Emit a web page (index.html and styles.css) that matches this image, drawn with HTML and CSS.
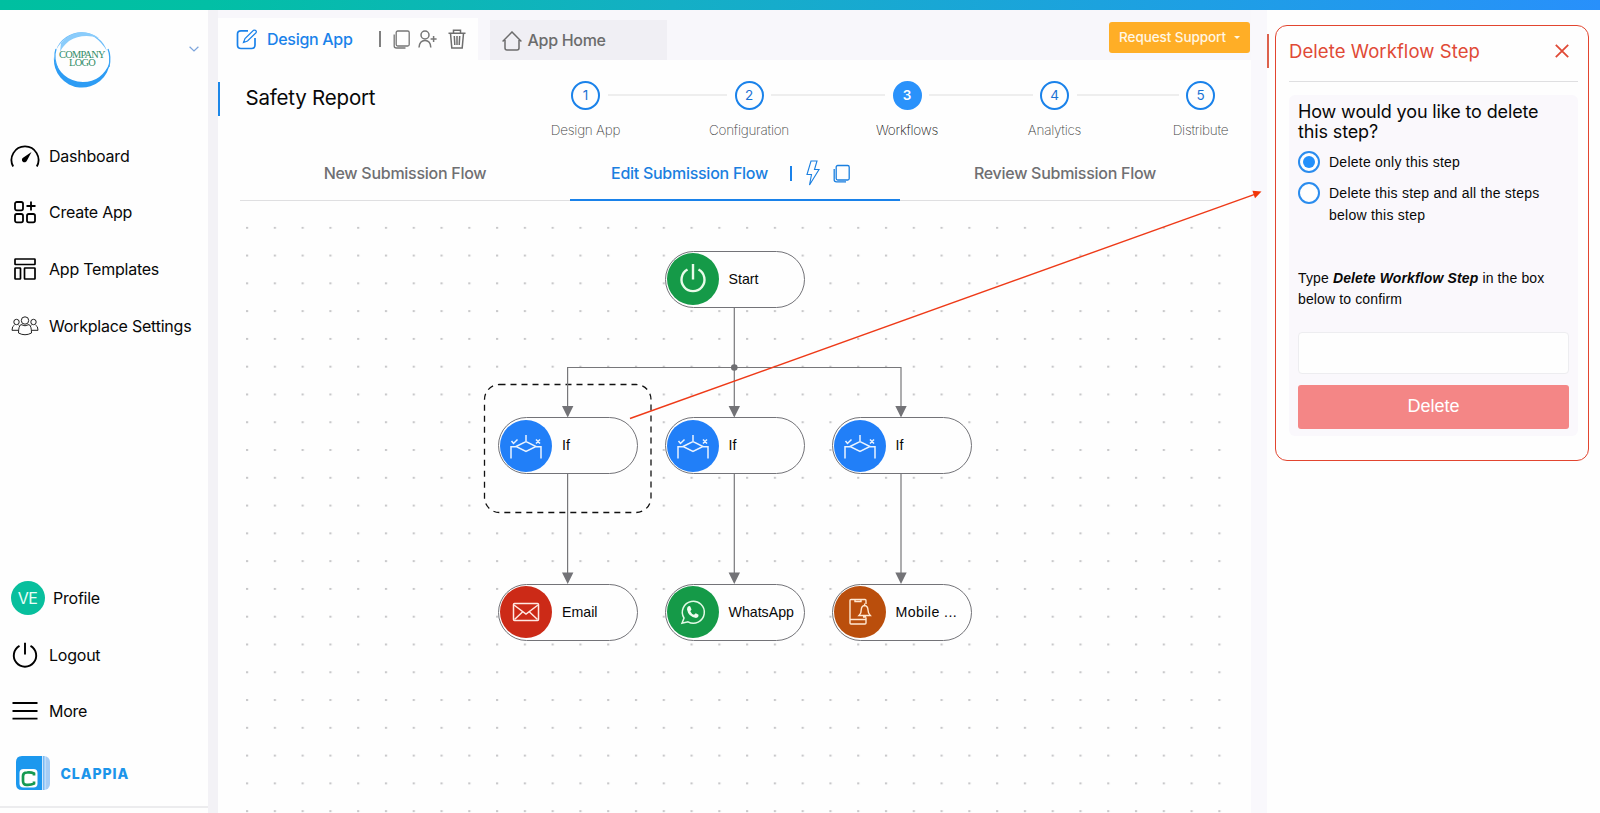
FILE: index.html
```html
<!DOCTYPE html>
<html lang="en">
<head>
<meta charset="utf-8">
<title>Safety Report</title>
<link rel="stylesheet" href="styles.css">
</head>
<body>
<div class="stripe"></div>
<div class="shell">
  <aside class="sidebar">
    <div class="brand">
      <div class="logo">
        <svg class="logo-ring" viewBox="0 0 60 60" width="60" height="60">
          <path d="M4 21A27 27 0 0 1 55 22Q44 4 29 4Q12 6 4 21z" fill="#3ba5f7" opacity=".75"/>
          <path d="M9 14A27 27 0 0 1 47 9Q30 4 17 12Q10 18 8 23z" fill="#8accfb"/>
          <path d="M2 28A28 28 0 0 0 58 33Q50 53 31 53Q8 52 2 28z" fill="#2d9cf4"/>
          <path d="M4 20Q1 29 6 40M56 20Q59 27 57 38" fill="none" stroke="#3ba5f7" stroke-width="1.3"/>
        </svg>
        <span class="logo-text">COMPANY<br>LOGO</span>
      </div>
      <svg class="chevron" width="10" height="6" viewBox="0 0 10 6"><path d="M.6.7 5 5 9.4.7" fill="none" stroke="#7da5dc" stroke-width="1.2"/></svg>
    </div>
    <nav class="menu">
      <a class="item"><span class="ico"><svg width="30" height="24" viewBox="0 0 30 24"><path d="M3.200 22.500A13.500 13.500 0 1 1 26.800 22.500" fill="none" stroke="#000" stroke-width="1.8"/><path d="M21.5 8 17 16.5A2.6 2.6 0 1 1 13.4 13.4z"/></svg></span>Dashboard</a>
      <a class="item"><span class="ico"><svg width="24" height="24" viewBox="0 0 24 24" fill="none" stroke="#000" stroke-width="1.8"><rect x="2" y="2" width="8" height="8.4" rx="1.8"/><rect x="2" y="14" width="8" height="8.4" rx="1.8"/><rect x="14" y="14" width="8" height="8.4" rx="1.8"/><path d="M18 1.500v9M13.500 6h9"/></svg></span>Create App</a>
      <a class="item"><span class="ico"><svg width="24" height="24" viewBox="0 0 24 24" fill="none" stroke="#000" stroke-width="1.7"><rect x="2" y="2" width="20" height="5.500" rx=".5"/><rect x="2" y="11" width="5.500" height="11" rx=".5"/><rect x="11.500" y="11" width="10.500" height="11" rx=".5"/></svg></span>App Templates</a>
      <a class="item"><span class="ico"><svg width="28" height="20" viewBox="0 0 28 20" fill="none" stroke="#222" stroke-width="1"><circle cx="14" cy="4.500" r="3.700"/><path d="M10 8.600Q7.500 10 7.500 17Q14 20.500 20.500 17Q20.500 10 18 8.600Q14 11 10 8.600z"/><circle cx="5.500" cy="6" r="2.700"/><circle cx="22.500" cy="6" r="2.700"/><path d="M3.500 9Q1 10 1 14.300H7.200M8.500 9.700 7.500 9M24.500 9Q27 10 27 14.300H20.800M19.500 9.700 20.500 9"/></svg></span>Workplace Settings</a>
    </nav>
    <nav class="menu menu-bottom">
      <a class="item profile"><span class="avatar">VE</span>Profile</a>
      <a class="item"><span class="ico"><svg width="26" height="26" viewBox="0 0 26 26" fill="none" stroke="#000" stroke-width="1.900"><path d="M7.500 3.800A11.200 11.200 0 1 0 18.500 3.800M13 .8V12.500"/></svg></span>Logout</a>
      <a class="item"><span class="ico"><svg width="26" height="20" viewBox="0 0 26 20" stroke="#000" stroke-width="1.800"><path d="M.5 2H25.500M.5 10H25.500M.5 17.600H25.500"/></svg></span>More</a>
    </nav>
    <div class="clappia">
      <svg width="34" height="34" viewBox="0 0 34 34"><rect x="8" width="26" height="34" rx="6" fill="#a6cdf5"/><path d="M8 0H29V34H8z" fill="#79b9f3"/><path d="M6 0H26V34H6Q0 34 0 28V6Q0 0 6 0z" fill="#1c98ee"/><path d="M26.500 0V34M29 0V34" stroke="#e6f2fd" stroke-width=".8"/><rect x="3.500" y="13" width="18" height="18.500" rx="4" fill="#fff"/><path d="M18 19.500V17.500Q15 16 11 16.500Q7 16.500 7 20V25Q7 29 11 28.800Q15 29 18 27.500V25.500" fill="none" stroke="#169a52" stroke-width="2.700"/></svg>
      <span>CLAPPIA</span>
    </div>
    <div class="side-rule"></div>
  </aside>

  <main class="main">
    <header class="tabs">
      <div class="tab tab-active">
        <svg width="22" height="21" viewBox="0 0 22 21" fill="none" stroke="#1a82ea" stroke-width="1.700"><path d="M12 1.800H5Q1.500 1.800 1.500 5V16Q1.500 19.500 5 19.500H15.500Q19 19.500 19 16V9"/><path d="M7.500 13.500 9 9.500 17.500 1.300Q19 .5 20.300 2.200Q20.500 3.500 19.500 4.300L11.500 12z" stroke-width="1.200"/></svg>
        <span class="tab-name">Design App</span>
        <i class="bar"></i>
        <svg class="i-copy" width="17" height="19" viewBox="0 0 17 19" fill="none" stroke="#767676" stroke-width="1.300"><rect x="3.200" y="1" width="13" height="15" rx="1.500"/><path d="M1.200 4.500V16Q1.200 18 3.500 18H12.500"/></svg>
        <svg class="i-user" width="19" height="18" viewBox="0 0 19 18" fill="none" stroke="#767676" stroke-width="1.500"><circle cx="7" cy="5" r="4"/><path d="M1 17.500Q1.500 10.500 7 10.500T12.800 17.500M15.600 6V12M12.600 9H18.600"/></svg>
        <svg class="i-bin" width="18" height="20" viewBox="0 0 18 20" fill="none" stroke="#6e6e6e" stroke-width="1.500"><path d="M.5 4.200H17.500M2.500 4.500 3.800 19H14.200L15.500 4.500M5.500 4V1.200H12.500V4M6.300 7 6.800 16M9 7V16M11.700 7 11.200 16"/></svg>
      </div>
      <div class="tab tab-home">
        <svg width="20" height="20" viewBox="0 0 20 20" fill="none" stroke="#6c6c6c" stroke-width="1.500"><path d="M.6 10.500 10 1 19.400 10.500M3 9V17Q3 19 5 19H15Q17 19 17 17V9"/></svg>
        <span>App Home</span>
      </div>
      <button class="support">Request Support <i class="caret"></i></button>
    </header>

    <section class="title-row">
      <i class="title-mark"></i>
      <h1>Safety Report</h1>
      <ol class="steps">
        <li class="step"><b>1</b><span>Design App</span></li>
        <li class="link l1"></li>
        <li class="step"><b>2</b><span>Configuration</span></li>
        <li class="link l2"></li>
        <li class="step on"><b>3</b><span>Workflows</span></li>
        <li class="link l3"></li>
        <li class="step"><b>4</b><span>Analytics</span></li>
        <li class="link l4"></li>
        <li class="step"><b>5</b><span>Distribute</span></li>
      </ol>
    </section>

    <nav class="flows">
      <div class="flow">New Submission Flow</div>
      <div class="flow flow-on"><span>Edit Submission Flow</span><i class="bar-blue"></i>
        <svg class="i-bolt" width="14" height="26" viewBox="0 0 14 26" fill="none" stroke="#1a7fe0" stroke-width="1.100"><path d="M5 1H11L8.500 9.500H13L3.500 25L5.500 14.500H1z"/></svg>
        <svg width="17" height="19" viewBox="0 0 17 19" fill="none" stroke="#1a7fe0" stroke-width="1.300"><rect x="3.200" y="1.500" width="13" height="14.500" rx="1.500"/><path d="M1.200 5V16Q1.200 17.800 3.500 17.800H13"/></svg>
      </div>
      <div class="flow">Review Submission Flow</div>
    </nav>

    <section class="canvas">
      <svg class="wires" viewBox="218 201 1033 612" width="1033" height="612">
        <defs>
          <pattern id="dots" x="246" y="226.800" width="27.780" height="27.780" patternUnits="userSpaceOnUse"><rect x="0" y="0" width="2.200" height="1.900" fill="#c6c6c8"/></pattern>
        </defs>
        <rect x="246" y="226.500" width="976" height="590" fill="url(#dots)"/>
        <rect x="484.500" y="384.500" width="166.500" height="128" rx="15" fill="#fefefe" stroke="#111" stroke-width="1.300" stroke-dasharray="6 5"/>
        <g fill="none" stroke="#77777a" stroke-width="1.200"><path d="M734.300 307V416M567.600 416V367.500H901V416M567.600 474V582M734.300 474V582M901 474V582"/></g>
        <circle cx="734.300" cy="367.500" r="3.300" fill="#6e6e72"/>
        <g fill="#737377"><path d="M562 406h11.400l-5.700 11.500zM728.600 406H740l-5.700 11.500zM895.300 406h11.400L901 417.500zM562 572.500h11.400L567.700 584zM728.600 572.500H740L734.300 584zM895.300 572.500h11.400L901 584z"/></g>
      </svg>
      <div class="node n-start"><span class="disc green"><svg width="52" height="52" viewBox="-26 -26 52 52"><path d="M-5.500-9.500A11.500 11.500 0 1 0 5.500-9.500M0-15V.5" fill="none" stroke="#e9fbe9" stroke-width="2.400"/></svg></span><span class="name">Start</span></div>
      <div class="node n-if1"><span class="disc blue"><svg class="decision" width="52" height="52" viewBox="-26 -26 52 52"><path d="M0-11V-4.500M-10 .5 0-4.500 10 .5 0 5.500zM-15 12.500V.8H-10M15 12.500V.8H10M-14.500-5 -12.500-2.500 -8.500-6.500M10-6.500 14-2.500M14-6.500 10-2.500"/></svg></span><span class="name">If</span></div>
      <div class="node n-if2"><span class="disc blue"><svg class="decision" width="52" height="52" viewBox="-26 -26 52 52"><path d="M0-11V-4.500M-10 .5 0-4.500 10 .5 0 5.500zM-15 12.500V.8H-10M15 12.500V.8H10M-14.500-5 -12.500-2.500 -8.500-6.500M10-6.500 14-2.500M14-6.500 10-2.500"/></svg></span><span class="name">If</span></div>
      <div class="node n-if3"><span class="disc blue"><svg class="decision" width="52" height="52" viewBox="-26 -26 52 52"><path d="M0-11V-4.500M-10 .5 0-4.500 10 .5 0 5.500zM-15 12.500V.8H-10M15 12.500V.8H10M-14.500-5 -12.500-2.500 -8.500-6.500M10-6.500 14-2.500M14-6.500 10-2.500"/></svg></span><span class="name">If</span></div>
      <div class="node n-mail"><span class="disc red"><svg width="52" height="52" viewBox="-26 -26 52 52" fill="none" stroke="#ffe9e4" stroke-width="1.500"><rect x="-12.500" y="-8.500" width="25" height="17" rx="1"/><path d="M-12-7 0 2 12-7M-11.500 7.500-3.500 0M11.500 7.500 3.500 0"/></svg></span><span class="name">Email</span></div>
      <div class="node n-wa"><span class="disc green"><svg width="52" height="52" viewBox="-26 -26 52 52"><path d="M-11 11.300-9 6A11 11 0 1 1-5 9.800z" fill="none" stroke="#e2fae6" stroke-width="1.500"/><path d="M-5-5.500Q-3-6.500-2.500-5L-1.500-2.500-2.700-.8Q-1.500 2 1 2.800L2.800 1.300 5.500 2.800Q5.800 5.500 3 6Q-4.500 5-6-2.500Q-6-4.500-5-5.500z" fill="#effcf0"/></svg></span><span class="name">WhatsApp</span></div>
      <div class="node n-mob"><span class="disc brown"><svg width="52" height="52" viewBox="-26 -26 52 52" fill="none" stroke="#ffe8d2" stroke-width="1.400"><path d="M6-8V-11.500Q6-12.500 5-12.500H-9Q-10-12.500-10-11.500V11Q-10 12 -9 12H5Q6 12 6 11V5.500M-10 7.500H6M-5-12V-10.500H1V-12"/><path d="M-1 3.500Q1.500 1 1.200-2Q1.500-6.300 4.500-6.500Q7.800-6.300 8-2Q8 1 10.300 3.500zM4.600-7V-8.500M3 5H6.200"/></svg></span><span class="name wide">Mobile ...</span></div>
    </section>
  </main>

  <aside class="side">
    <i class="side-mark"></i>
    <div class="panel">
      <div class="panel-head"><h2>Delete Workflow Step</h2><svg width="14" height="14" viewBox="0 0 14 14"><path d="M.8.800 13.200 13.200M13.200.8.800 13.200" stroke="#e04a36" stroke-width="1.800"/></svg></div>
      <div class="card">
        <h3>How would you like to delete this step?</h3>
        <label class="opt"><i class="radio checked"></i><span>Delete only this step</span></label>
        <label class="opt"><i class="radio"></i><span>Delete this step and all the steps below this step</span></label>
        <p class="confirm">Type <em>Delete Workflow Step</em> in the box below to confirm</p>
        <input class="field" type="text">
        <button class="delete">Delete</button>
      </div>
    </div>
  </aside>
</div>
<svg class="pointer" width="1600" height="813" viewBox="0 0 1600 813"><path d="M630 418.500 1254 194.600" stroke="#ee3a18" stroke-width="1.400"/><path d="M1261.500 191.500 1252.400 190.800 1255 198.200z" fill="#f23508"/></svg>
</body>
</html>
```

FILE: styles.css
```css
* { box-sizing: border-box; }
body { margin: 0; width: 1600px; height: 813px; overflow: hidden; display: flex; flex-direction: column; background: #fefefe; font-family: Inter, "Liberation Sans", sans-serif; color: #080808; }
.stripe { height: 10px; flex: none; background: linear-gradient(90deg, #00bfa0 0%, #02bfa5 13%, #14afc5 42%, #1e9fe4 75%, #2890fb 100%); }
.shell { flex: 1; display: flex; min-height: 0; }
h1, h2, h3, p, ol { margin: 0; padding: 0; font-weight: 400; }
svg { display: block; flex: none; }

.sidebar { width: 208px; flex: none; background: #fefefe; display: flex; flex-direction: column; }
.brand { height: 118px; display: flex; align-items: flex-start; justify-content: space-between; padding: 19px 9px 0 52px; }
.logo { width: 60px; height: 60px; display: grid; place-items: center; }
.logo-ring, .logo-text { grid-area: 1 / 1; }
.logo-text { font: 10.400px/8px "Liberation Serif", serif; color: #318d67; text-align: center; white-space: nowrap; letter-spacing: -.75px; margin-top: -1px; }
.chevron { margin-top: 17px; }
.menu { display: flex; flex-direction: column; }
.item { height: 56.6px; display: flex; align-items: center; padding-left: 9.500px; font-size: 16px; color: #080808; letter-spacing: -.23px; padding-bottom: 1px; }
.ico { width: 31px; margin-right: 8.500px; display: grid; place-items: center; }
.menu-bottom { margin-top: 216px; }
.avatar { width: 34px; height: 34px; border-radius: 50%; background: #08bf9d; color: #e9fff9; display: grid; place-items: center; font-size: 16px; margin: 0 8.500px 0 1px; letter-spacing: -.5px; }
.clappia { display: flex; align-items: center; gap: 11px; padding: 16px 0 0 15.500px; color: #1c95ea; font: 800 14px Inter, sans-serif; letter-spacing: .95px; }
.side-rule { margin-top: auto; margin-bottom: 5px; height: 2px; background: #ececee; }

.main { width: 1059px; flex: none; display: flex; flex-direction: column; border-left: 10px solid #f3f2f6; border-right: 16px solid #f9f8fc; background: #fefefe; }
.tabs { height: 50px; flex: none; display: flex; background: #f8f7fb; padding-top: 8px; }
.tab { display: flex; align-items: center; font-size: 16px; font-weight: 500; letter-spacing: -.3px; }
.tab-active { width: 260px; background: #fefefe; color: #1a82ea; padding-left: 18px; }
.tab-name { margin-left: 9px; width: 112px; }
.bar { width: 2px; height: 16px; background: #808080; margin-right: 12px; }
.i-user { margin-left: 8px; }
.i-bin { margin-left: 11px; }
.tab-home { margin: 2px 0 0 12px; width: 177px; background: #f0eff4; color: #6c6c6c; padding: 0 0 1px 11.500px; gap: 6px; }
.tab-home svg { margin-top: 3px; }
.support { margin: 4px 1px 0 auto; width: 141px; height: 31px; border: 0; border-radius: 3px; background: #ffae26; color: #fff7e4; font: 500 13.5px Inter, sans-serif; display: flex; align-items: center; justify-content: center; gap: 8px; letter-spacing: -.08px; padding: 0 0 1px; white-space: nowrap; }
.caret { border: 3.500px solid transparent; border-top-color: #fff7e4; border-bottom: 0; }

.title-row { height: 90px; flex: none; display: flex; align-items: flex-start; padding-top: 20px; }
.title-mark { width: 2px; height: 34px; margin-top: 2px; background: #1c87e8; }
h1 { width: 310px; margin-left: 25.500px; padding-top: 1px; font-size: 20.500px; line-height: 34px; letter-spacing: -.2px; }
.steps { list-style: none; display: flex; }
.step { width: 60px; display: flex; flex-direction: column; align-items: center; }
.step b { width: 29px; height: 29px; margin-top: 1px; border: 2px solid #1a82ea; border-radius: 50%; display: grid; place-items: center; font: 400 13.500px/1 Inter, sans-serif; color: #1a72d4; }
.step span { margin-top: 12px; font: 200 13.500px/17px Inter, sans-serif; color: #444; white-space: nowrap; letter-spacing: -.25px; }
.step.on b { background: #2a92fb; color: #fff; font-weight: 600; border-color: #2a92fb; }
.step.on span { color: #111; }
.link { height: 2px; background: #eee; margin: 14px -8px 0; }
.l1 { width: 119.500px; }
.l2 { width: 114px; }
.l3 { width: 103.500px; }
.l4 { width: 102px; }

.flows { height: 51px; flex: none; margin: 0 31px 0 22px; display: flex; border-bottom: 1px solid #dfdfe1; }
.flow { width: 330px; height: 51px; flex: none; display: flex; align-items: center; justify-content: center; font-size: 16px; font-weight: 500; color: #6f6f72; padding-bottom: 5px; letter-spacing: -.27px; white-space: nowrap; }
.flow-on { color: #1a7fe0; border-bottom: 2px solid #1a82ea; justify-content: flex-start; padding: 0 0 3px 41px; }
.bar-blue { width: 2px; height: 15px; background: #1a82ea; margin: 0 14px 0 22.500px; }
.i-bolt { margin-right: 13px; }

.canvas { flex: 1; position: relative; overflow: hidden; }
.wires { position: absolute; left: 0; top: 0; }
.node { position: absolute; width: 140px; height: 57px; border: 1px solid #737378; border-radius: 29px; background: #fefefe; display: flex; align-items: center; padding-left: 1px; gap: 10px; font: 14.200px "Liberation Sans", sans-serif; color: #080808; white-space: nowrap; }
.name { padding-bottom: 1px; }
.wide { letter-spacing: .4px; }
.disc { width: 52px; height: 52px; border-radius: 50%; flex: none; }
.decision { fill: none; stroke: #e9f3ff; stroke-width: 1.500; }
.green { background: #159a48; } .blue { background: #217ff8; } .red { background: #cc2a17; } .brown { background: #ba4e0c; }
.n-start { left: 446.500px; top: 49.500px; }
.n-if1 { left: 280px; top: 216px; } .n-if2 { left: 446.500px; top: 216px; } .n-if3 { left: 613.500px; top: 216px; }
.n-mail { left: 280px; top: 382.500px; } .n-wa { left: 446.500px; top: 382.500px; } .n-mob { left: 613.500px; top: 382.500px; }

.side { flex: 1; display: flex; align-items: flex-start; background: #fefefe; }
.side-mark { width: 2px; height: 34px; background: #dd614c; margin: 24px 6px 0 0; }
.panel { width: 313.500px; height: 435.500px; border: 1.500px solid #e2452f; border-radius: 12px; margin-top: 15px; padding: 0 10px 0 13px; background: #fefefe; }
.panel-head { height: 56px; border-bottom: 1px solid #dfdfe1; display: flex; justify-content: space-between; align-items: center; padding: 0 9px 6px 0; }
h2 { font-size: 18.500px; color: #e04a36; letter-spacing: .08px; }
.card { margin-top: 13px; height: 341px; background: #faf8fc; border-radius: 6px; padding: 7px 8px 0 9px; }
h3 { font-size: 18px; line-height: 20px; letter-spacing: -.13px; }
.opt { display: flex; font: 14px/22px "Liberation Sans", sans-serif; margin-top: 9px; gap: 9px; letter-spacing: .24px; }
.radio { width: 22px; height: 22px; border: 2px solid #2a8cee; border-radius: 50%; flex: none; background: #fefefe; display: grid; place-items: center; }
.checked::after { content: ""; width: 12px; height: 12px; border-radius: 50%; background: #2390fb; }
.confirm { font: 14px/21.500px "Liberation Sans", sans-serif; margin-top: 41.500px; letter-spacing: .13px; }
em { font-weight: 700; }
.field { display: block; width: 271px; height: 42px; margin-top: 21px; border: 1px solid #ededf0; border-radius: 4px; background: #fefefe; }
.delete { width: 271px; height: 44px; margin-top: 11px; border: 0; border-radius: 3px; background: #f48686; color: #fff; font: 18px "Liberation Sans", sans-serif; padding: 0; display: block; }
.pointer { position: absolute; left: 0; top: 0; pointer-events: none; }
```
